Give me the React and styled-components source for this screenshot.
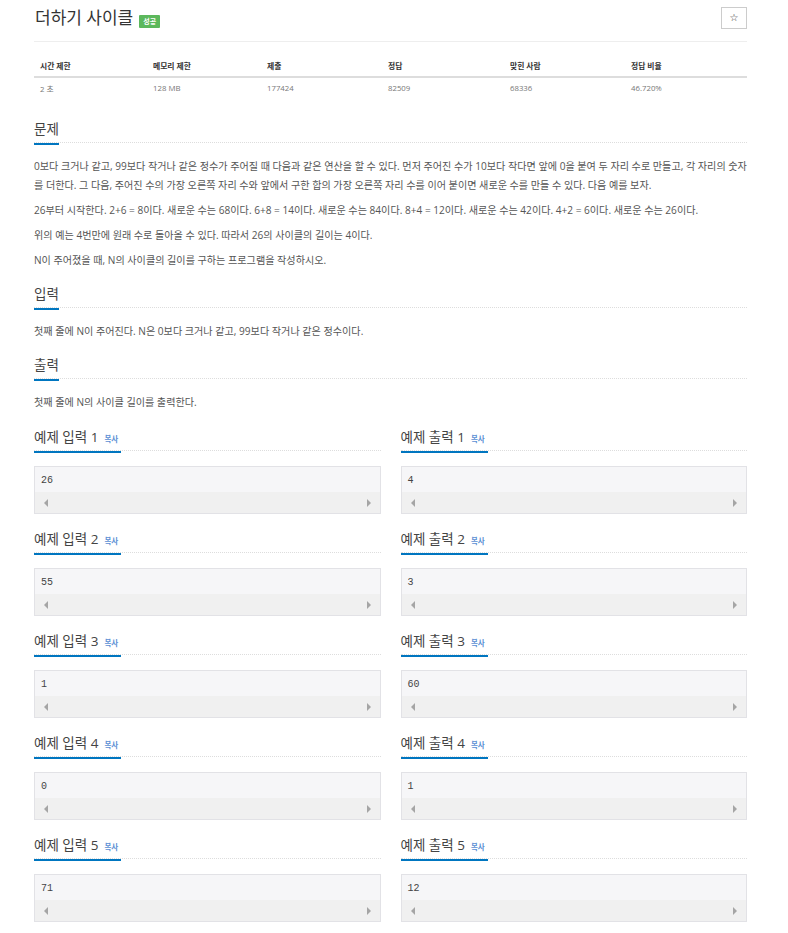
import React from "react";
import styled, { createGlobalStyle } from "styled-components";

const GlobalStyle = createGlobalStyle`
  body {
    margin: 0;
    background: #fff;
    font-family: "Open Sans", "Noto Sans CJK KR", sans-serif;
    color: #555;
  }
`;

const Page = styled.div`
  width: 713px;
  padding: 0 41px 0 34px;
`;

const Header = styled.div`
  display: flex;
  align-items: center;
  height: 36px;
  padding-bottom: 5px;
  border-bottom: 1px solid #eee;
`;

const Title = styled.h1`
  margin: 0 0 0 1px;
  font-size: 17px;
  font-weight: 400;
  line-height: 24px;
  color: #333;
`;

const Badge = styled.span`
  margin: 6px 0 0 6px;
  padding: 0 4px;
  height: 13px;
  line-height: 13px;
  background: #5cb85c;
  color: #fff;
  font-size: 7px;
  font-weight: 700;
  border-radius: 1px;
`;

const StarButton = styled.button`
  margin-left: auto;
  width: 26px;
  height: 22px;
  padding: 0;
  background: #fff;
  border: 1px solid #ccc;
  color: #333;
  font-size: 10px;
  line-height: 20px;
  font-family: "DejaVu Sans", sans-serif;
`;

const Table = styled.table`
  width: 713px;
  margin: 13px 0 19px;
  border-collapse: collapse;
  table-layout: fixed;
  font-size: 7.8px;
`;

const Th = styled.th`
  width: ${(p) => p.w - 6}px;
  height: 21px;
  padding: 0 0 0 6px;
  text-align: left;
  font-weight: 700;
  color: #333;
  border-bottom: 2px solid #ddd;
`;

const Td = styled.td`
  height: 20px;
  padding: 0 0 0 6px;
  color: #777;
`;

const SectionHead = styled.div`
  border-bottom: 1px dotted #ddd;
  margin: ${(p) => (p.top === undefined ? 12 : p.top)}px 0 14px;
  height: 25px;
`;

const SectionTitle = styled.h2`
  display: inline-block;
  margin: 0;
  padding: 0 ${(p) => (p.wide ? 3 : 0)}px 4px 0;
  height: 20px;
  font-size: 13.5px;
  font-weight: 400;
  line-height: 20px;
  color: #444;
  border-bottom: 2px solid #0076c0;
`;

const Copy = styled.span`
  margin-left: 6px;
  font-size: 7.5px;
  color: #5b8fd4;
  font-weight: 700;
`;

const Para = styled.p`
  margin: 0 0 6px;
  font-size: 10.1px;
  line-height: 19px;
  color: #555;
`;

const Samples = styled.div`
  display: grid;
  grid-template-columns: 1fr 1fr;
  column-gap: 20px;
  row-gap: 13px;
  margin-top: 13px;
`;

const Sample = styled.div`
  ${SectionHead} {
    margin: 0 0 15px;
  }
`;

const CodeBox = styled.div`
  height: 46px;
  border: 1px solid #e2e2e6;
  background: #f6f6f8;
  display: flex;
  flex-direction: column;
`;

const Code = styled.pre`
  margin: 0;
  height: 25px;
  padding: 0 0 0 6px;
  font-family: "Liberation Mono", "DejaVu Sans Mono", monospace;
  font-size: 10px;
  line-height: 27px;
  color: #444;
`;

const ScrollTrack = styled.div`
  flex: 1;
  background: #f0f0f0;
  display: flex;
  align-items: center;
  justify-content: space-between;
  padding: 0 9px 0 9px;
`;

const Arrow = styled.span`
  width: 0;
  height: 0;
  border-top: 4px solid transparent;
  border-bottom: 4px solid transparent;
  ${(p) =>
    p.dir === "left"
      ? "border-right: 4px solid #a5a5a5;"
      : "border-left: 4px solid #a5a5a5;"}
`;

const cols = [
  ["시간 제한", "2 초", 113],
  ["메모리 제한", "128 MB", 114],
  ["제출", "177424", 121],
  ["정답", "82509", 122],
  ["맞힌 사람", "68336", 121],
  ["정답 비율", "46.720%", 122],
];

const samples = [
  ["26", "4"],
  ["55", "3"],
  ["1", "60"],
  ["0", "1"],
  ["71", "12"],
];

const SampleBlock = ({ label, value }) => (
  <Sample>
    <SectionHead>
      <SectionTitle wide>
        {label}
        <Copy>복사</Copy>
      </SectionTitle>
    </SectionHead>
    <CodeBox>
      <Code>{value}</Code>
      <ScrollTrack>
        <Arrow dir="left" />
        <Arrow dir="right" />
      </ScrollTrack>
    </CodeBox>
  </Sample>
);

const App = () => {
  return (
    <Page>
      <GlobalStyle />
      <Header>
        <Title>더하기 사이클</Title>
        <Badge>성공</Badge>
        <StarButton>☆</StarButton>
      </Header>

      <Table>
        <thead>
          <tr>
            {cols.map(([h, , w]) => (
              <Th key={h} w={w}>
                {h}
              </Th>
            ))}
          </tr>
        </thead>
        <tbody>
          <tr>
            {cols.map(([h, v]) => (
              <Td key={h}>{v}</Td>
            ))}
          </tr>
        </tbody>
      </Table>

      <SectionHead top={0}>
        <SectionTitle>문제</SectionTitle>
      </SectionHead>
      <Para>
        0보다 크거나 같고, 99보다 작거나 같은 정수가 주어질 때 다음과 같은 연산을 할 수 있다. 먼저 주어진 수가 10보다 작다면 앞에 0을 붙여 두 자리 수로 만들고, 각 자리의 숫자를 더한다. 그 다음, 주어진 수의 가장 오른쪽 자리 수와 앞에서 구한 합의 가장 오른쪽 자리 수를 이어 붙이면 새로운 수를 만들 수 있다. 다음 예를 보자.
      </Para>
      <Para>
        26부터 시작한다. 2+6 = 8이다. 새로운 수는 68이다. 6+8 = 14이다. 새로운 수는 84이다. 8+4 = 12이다. 새로운 수는 42이다. 4+2 = 6이다. 새로운 수는 26이다.
      </Para>
      <Para>위의 예는 4번만에 원래 수로 돌아올 수 있다. 따라서 26의 사이클의 길이는 4이다.</Para>
      <Para>N이 주어졌을 때, N의 사이클의 길이를 구하는 프로그램을 작성하시오.</Para>

      <SectionHead>
        <SectionTitle>입력</SectionTitle>
      </SectionHead>
      <Para>첫째 줄에 N이 주어진다. N은 0보다 크거나 같고, 99보다 작거나 같은 정수이다.</Para>

      <SectionHead>
        <SectionTitle>출력</SectionTitle>
      </SectionHead>
      <Para>첫째 줄에 N의 사이클 길이를 출력한다.</Para>

      <Samples>
        {samples.map(([input, output], i) => (
          <React.Fragment key={i}>
            <SampleBlock label={`예제 입력 ${i + 1}`} value={input} />
            <SampleBlock label={`예제 출력 ${i + 1}`} value={output} />
          </React.Fragment>
        ))}
      </Samples>
    </Page>
  );
};

export default App;
